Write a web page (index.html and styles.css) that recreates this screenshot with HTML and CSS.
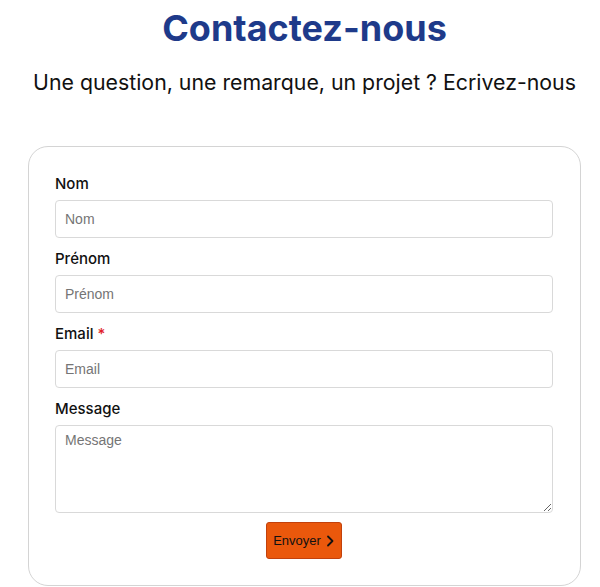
FILE: index.html
```html
<!DOCTYPE html>
<html lang="fr">
<head>
<meta charset="utf-8">
<title>Contactez-nous</title>
<link rel="stylesheet" href="styles.css">
</head>
<body>
<main class="page">
  <header class="intro">
    <h1 class="title">Contactez-nous</h1>
    <p class="subtitle">Une question, une remarque, un projet ? Ecrivez-nous</p>
  </header>
  <form class="card">
    <div class="field">
      <label class="label" for="nom">Nom</label>
      <input class="input" id="nom" type="text" placeholder="Nom">
    </div>
    <div class="field">
      <label class="label" for="prenom">Prénom</label>
      <input class="input" id="prenom" type="text" placeholder="Prénom">
    </div>
    <div class="field">
      <label class="label" for="email">Email <span class="req">*</span></label>
      <input class="input" id="email" type="email" placeholder="Email">
    </div>
    <div class="field field-last">
      <label class="label" for="message">Message</label>
      <textarea class="input textarea" id="message" placeholder="Message"></textarea>
    </div>
    <div class="actions">
      <button class="btn" type="button">Envoyer
        <svg class="chev" width="10" height="12" viewBox="0 0 10 12" aria-hidden="true"><path d="M3 1.5 L7.5 6 L3 10.5" fill="none" stroke="#111" stroke-width="1.8" stroke-linecap="round" stroke-linejoin="round"/></svg>
      </button>
    </div>
  </form>
</main>
</body>
</html>
```
FILE: styles.css
```css
* { box-sizing: border-box; }
html, body { margin: 0; padding: 0; background: #fff; }
body { font-family: Inter, "Liberation Sans", Arial, sans-serif; color: #111; }
.page { width: 553px; margin-left: 28px; }
.intro { text-align: center; padding-top: 6px; }
.title {
  margin: 0;
  font-size: 36px;
  line-height: 44px;
  font-weight: 700;
  color: #1e3a8a;
}
.subtitle {
  margin: 18px -20px 0;
  font-size: 21.3px;
  line-height: 28px;
  font-weight: 400;
  color: #111;
}
.card {
  margin-top: 50px;
  border: 1px solid #d4d4d4;
  border-radius: 20px;
  padding: 27px 27px 26px 26px;
}
.field { display: flex; flex-direction: column; margin-bottom: 11px; }
.field-last { margin-bottom: 9px; }
.label {
  font-size: 15px;
  line-height: 20px;
  font-weight: 500;
  color: #111;
  margin-bottom: 6px;
}
.req { color: #e11d2a; }
.input {
  display: block;
  width: 100%;
  height: 38px;
  border: 1px solid #d9d9d9;
  border-radius: 4px;
  padding: 0 9px;
  font-family: "Liberation Sans", Arial, sans-serif;
  font-size: 14px;
  color: #111;
  background: #fff;
}
.input::placeholder { color: #757575; }
.textarea { height: 88px; padding: 6px 9px; resize: vertical; }
.actions { display: flex; justify-content: center; }
.btn {
  display: flex;
  align-items: center;
  gap: 4px;
  height: 37px;
  padding: 0 6px 0 6px;
  background: #ea580c;
  border: 1px solid #c2410c;
  border-radius: 3px;
  font-family: "Liberation Sans", Arial, sans-serif;
  font-size: 13px;
  color: #111;
}
.chev { display: block; }
```
